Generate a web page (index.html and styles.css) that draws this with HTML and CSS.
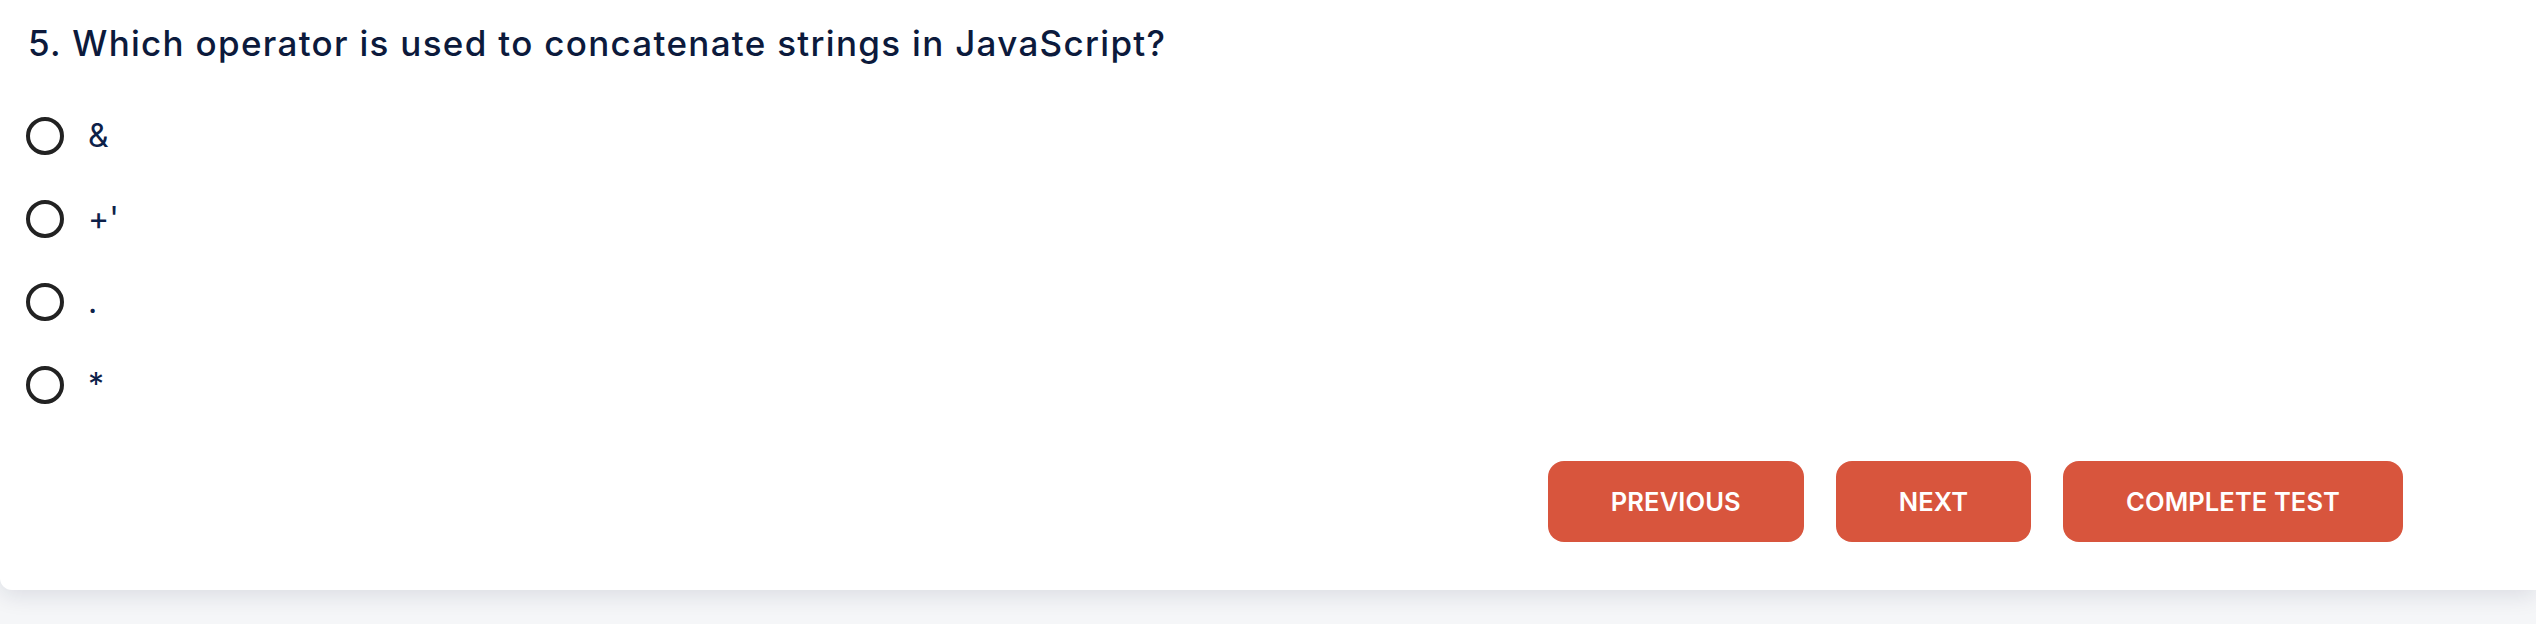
FILE: index.html
```html
<!DOCTYPE html>
<html lang="en">
<head>
<meta charset="utf-8">
<title>Quiz question</title>
<link rel="stylesheet" href="styles.css">
</head>
<body>
<div class="page">
  <section class="card">
    <h2 class="question">5. Which operator is used to concatenate strings in JavaScript?</h2>
    <ul class="options">
      <li class="option"><span class="radio"></span><span class="label">&amp;</span></li>
      <li class="option"><span class="radio"></span><span class="label">+'</span></li>
      <li class="option"><span class="radio"></span><span class="label">.</span></li>
      <li class="option"><span class="radio"></span><span class="label">*</span></li>
    </ul>
    <div class="actions">
      <button class="btn">PREVIOUS</button>
      <button class="btn">NEXT</button>
      <button class="btn">COMPLETE TEST</button>
    </div>
  </section>
</div>
</body>
</html>
```

FILE: styles.css
```css
html, body {
  margin: 0;
  padding: 0;
}
body {
  background: #f5f6f8;
  font-family: Inter, "Noto Sans", "Liberation Sans", sans-serif;
  overflow: hidden;
}
.page {
  height: 624px;
}
.card {
  background: #ffffff;
  padding: 17px 133px 48px 26px;
  border-bottom-left-radius: 12px;
  box-shadow: 0 6px 22px rgba(20, 30, 60, 0.11);
  display: flex;
  flex-direction: column;
}
.question {
  margin: 0 0 0 2px;
  font-size: 35px;
  line-height: 52px;
  font-weight: 500;
  letter-spacing: 1.3px;
  color: #0c1a3c;
}
.options {
  list-style: none;
  margin: 25px 0 0 0;
  padding: 0;
  display: flex;
  flex-direction: column;
}
.option {
  height: 83px;
  display: flex;
  align-items: center;
  gap: 24px;
}
.radio {
  width: 30px;
  height: 30px;
  border: 4px solid #222222;
  border-radius: 50%;
  flex: none;
}
.label {
  font-size: 32px;
  color: #0d2149;
  font-weight: 400;
}
.actions {
  margin-top: 35px;
  display: flex;
  justify-content: flex-end;
  gap: 32px;
}
.btn {
  height: 81px;
  padding: 0 63px;
  border: none;
  border-radius: 16px;
  background: #d8553d;
  color: #ffffff;
  font-family: inherit;
  font-size: 25.5px;
  font-weight: 600;
  letter-spacing: 0.1px;
}
```
